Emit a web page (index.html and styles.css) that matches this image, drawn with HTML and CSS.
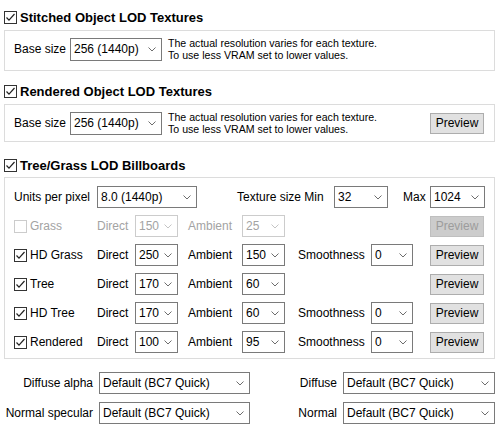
FILE: index.html
```html
<!DOCTYPE html>
<html>
<head>
<meta charset="utf-8">
<link rel="stylesheet" href="styles.css">
</head>
<body>
<div class="panel">

  <div class="heading">
    <span class="cb checked"><svg viewBox="0 0 11 11"><polyline points="1.5,5.5 4,8.2 9.5,2"/></svg></span>
    <span>Stitched Object LOD Textures</span>
  </div>
  <div class="group g-top">
    <div class="row-top">
      <span class="lbl">Base size</span>
      <div class="sel sel-base tall"><span>256 (1440p)</span><svg class="chev" viewBox="0 0 8 5"><polyline points="0.5,0.5 4,4 7.5,0.5"/></svg></div>
      <div class="desc">The actual resolution varies for each texture.<br>To use less VRAM set to lower values.</div>
    </div>
  </div>

  <div class="heading h2">
    <span class="cb checked"><svg viewBox="0 0 11 11"><polyline points="1.5,5.5 4,8.2 9.5,2"/></svg></span>
    <span>Rendered Object LOD Textures</span>
  </div>
  <div class="group g-mid">
    <div class="row-top">
      <span class="lbl">Base size</span>
      <div class="sel sel-base tall"><span>256 (1440p)</span><svg class="chev" viewBox="0 0 8 5"><polyline points="0.5,0.5 4,4 7.5,0.5"/></svg></div>
      <div class="desc">The actual resolution varies for each texture.<br>To use less VRAM set to lower values.</div>
      <button class="btn push">Preview</button>
    </div>
  </div>

  <div class="heading h3">
    <span class="cb checked"><svg viewBox="0 0 11 11"><polyline points="1.5,5.5 4,8.2 9.5,2"/></svg></span>
    <span>Tree/Grass LOD Billboards</span>
  </div>
  <div class="group g-bill">
    <div class="row">
      <span class="c-name">Units per pixel</span>
      <div class="sel sel-units"><span>8.0 (1440p)</span><svg class="chev" viewBox="0 0 8 5"><polyline points="0.5,0.5 4,4 7.5,0.5"/></svg></div>
      <span class="c-tex">Texture size Min</span>
      <div class="sel sel-min"><span>32</span><svg class="chev" viewBox="0 0 8 5"><polyline points="0.5,0.5 4,4 7.5,0.5"/></svg></div>
      <span class="c-max">Max</span>
      <div class="sel sel-max push"><span>1024</span><svg class="chev" viewBox="0 0 8 5"><polyline points="0.5,0.5 4,4 7.5,0.5"/></svg></div>
    </div>

    <div class="row disabled">
      <span class="c-name"><span class="cb"></span>Grass</span>
      <span class="c-direct">Direct</span>
      <div class="sel sel-sm"><span>150</span><svg class="chev" viewBox="0 0 8 5"><polyline points="0.5,0.5 4,4 7.5,0.5"/></svg></div>
      <span class="c-amb">Ambient</span>
      <div class="sel sel-sm"><span>25</span><svg class="chev" viewBox="0 0 8 5"><polyline points="0.5,0.5 4,4 7.5,0.5"/></svg></div>
      <button class="btn push">Preview</button>
    </div>

    <div class="row">
      <span class="c-name"><span class="cb checked"><svg viewBox="0 0 11 11"><polyline points="1.5,5.5 4,8.2 9.5,2"/></svg></span>HD Grass</span>
      <span class="c-direct">Direct</span>
      <div class="sel sel-sm"><span>250</span><svg class="chev" viewBox="0 0 8 5"><polyline points="0.5,0.5 4,4 7.5,0.5"/></svg></div>
      <span class="c-amb">Ambient</span>
      <div class="sel sel-sm"><span>150</span><svg class="chev" viewBox="0 0 8 5"><polyline points="0.5,0.5 4,4 7.5,0.5"/></svg></div>
      <span class="c-smooth">Smoothness</span>
      <div class="sel sel-s0"><span>0</span><svg class="chev" viewBox="0 0 8 5"><polyline points="0.5,0.5 4,4 7.5,0.5"/></svg></div>
      <button class="btn push">Preview</button>
    </div>

    <div class="row">
      <span class="c-name"><span class="cb checked"><svg viewBox="0 0 11 11"><polyline points="1.5,5.5 4,8.2 9.5,2"/></svg></span>Tree</span>
      <span class="c-direct">Direct</span>
      <div class="sel sel-sm"><span>170</span><svg class="chev" viewBox="0 0 8 5"><polyline points="0.5,0.5 4,4 7.5,0.5"/></svg></div>
      <span class="c-amb">Ambient</span>
      <div class="sel sel-sm"><span>60</span><svg class="chev" viewBox="0 0 8 5"><polyline points="0.5,0.5 4,4 7.5,0.5"/></svg></div>
      <button class="btn push">Preview</button>
    </div>

    <div class="row">
      <span class="c-name"><span class="cb checked"><svg viewBox="0 0 11 11"><polyline points="1.5,5.5 4,8.2 9.5,2"/></svg></span>HD Tree</span>
      <span class="c-direct">Direct</span>
      <div class="sel sel-sm"><span>170</span><svg class="chev" viewBox="0 0 8 5"><polyline points="0.5,0.5 4,4 7.5,0.5"/></svg></div>
      <span class="c-amb">Ambient</span>
      <div class="sel sel-sm"><span>60</span><svg class="chev" viewBox="0 0 8 5"><polyline points="0.5,0.5 4,4 7.5,0.5"/></svg></div>
      <span class="c-smooth">Smoothness</span>
      <div class="sel sel-s0"><span>0</span><svg class="chev" viewBox="0 0 8 5"><polyline points="0.5,0.5 4,4 7.5,0.5"/></svg></div>
      <button class="btn push">Preview</button>
    </div>

    <div class="row">
      <span class="c-name"><span class="cb checked"><svg viewBox="0 0 11 11"><polyline points="1.5,5.5 4,8.2 9.5,2"/></svg></span>Rendered</span>
      <span class="c-direct">Direct</span>
      <div class="sel sel-sm"><span>100</span><svg class="chev" viewBox="0 0 8 5"><polyline points="0.5,0.5 4,4 7.5,0.5"/></svg></div>
      <span class="c-amb">Ambient</span>
      <div class="sel sel-sm"><span>95</span><svg class="chev" viewBox="0 0 8 5"><polyline points="0.5,0.5 4,4 7.5,0.5"/></svg></div>
      <span class="c-smooth">Smoothness</span>
      <div class="sel sel-s0"><span>0</span><svg class="chev" viewBox="0 0 8 5"><polyline points="0.5,0.5 4,4 7.5,0.5"/></svg></div>
      <button class="btn push">Preview</button>
    </div>
  </div>

  <div class="formats">
    <span class="f-lbl">Diffuse alpha</span>
    <div class="sel"><span>Default (BC7 Quick)</span><svg class="chev" viewBox="0 0 8 5"><polyline points="0.5,0.5 4,4 7.5,0.5"/></svg></div>
    <span class="f-lbl">Diffuse</span>
    <div class="sel"><span>Default (BC7 Quick)</span><svg class="chev" viewBox="0 0 8 5"><polyline points="0.5,0.5 4,4 7.5,0.5"/></svg></div>
    <span class="f-lbl">Normal specular</span>
    <div class="sel"><span>Default (BC7 Quick)</span><svg class="chev" viewBox="0 0 8 5"><polyline points="0.5,0.5 4,4 7.5,0.5"/></svg></div>
    <span class="f-lbl">Normal</span>
    <div class="sel"><span>Default (BC7 Quick)</span><svg class="chev" viewBox="0 0 8 5"><polyline points="0.5,0.5 4,4 7.5,0.5"/></svg></div>
  </div>

</div>
</body>
</html>
```

FILE: styles.css
```css
* { box-sizing: border-box; }

body {
  margin: 0;
  background: #fff;
  color: #000;
  font-family: "Liberation Sans", Arial, sans-serif;
  font-size: 12px;
}

.panel {
  padding: 11px 5px 0 4px;
}

.heading {
  display: flex;
  align-items: center;
  gap: 3px;
  height: 13px;
  font-size: 13px;
  font-weight: bold;
  white-space: nowrap;
}
.h2 { margin-top: 14px; }
.h3 { margin-top: 17px; }

.cb {
  display: inline-flex;
  align-items: center;
  justify-content: center;
  width: 13px;
  height: 13px;
  flex: none;
  border: 1px solid #333;
  background: #fff;
}
.cb svg {
  width: 11px;
  height: 11px;
}
.cb polyline {
  fill: none;
  stroke: #222;
  stroke-width: 1.2;
}

.group {
  border: 1px solid #dcdcdc;
  margin-top: 6px;
  padding: 0 10px 0 9px;
}
.g-top { padding-top: 6px; padding-bottom: 9px; }
.g-mid { padding-top: 6px; padding-bottom: 6px; }
.g-bill {
  margin-top: 5px;
  padding-top: 8px;
  padding-bottom: 5px;
  display: flex;
  flex-direction: column;
  gap: 7px;
}

.row-top {
  display: flex;
  align-items: center;
}
.lbl { width: 56px; }

.sel {
  display: flex;
  align-items: center;
  justify-content: space-between;
  height: 22px;
  padding: 0 5px 0 3px;
  border: 1px solid #7a7a7a;
  background: #fff;
  white-space: nowrap;
  font-size: 12px;
}
.sel.tall { height: 23px; }
.chev {
  width: 8px;
  height: 5px;
  flex: none;
}
.chev polyline {
  fill: none;
  stroke: #6d6d6d;
  stroke-width: 1;
}

.sel-base { width: 92px; }
.desc {
  margin-left: 6px;
  font-size: 10.6px;
  line-height: 12px;
  white-space: nowrap;
}

.btn {
  width: 54px;
  height: 21px;
  padding: 0;
  border: 1px solid #adadad;
  background: #e1e1e1;
  color: #000;
  font-family: inherit;
  font-size: 12px;
}
.push { margin-left: auto; }

.row {
  display: flex;
  align-items: center;
  height: 22px;
  white-space: nowrap;
}
.c-name {
  display: flex;
  align-items: center;
  gap: 3px;
  width: 83px;
}
.c-direct { width: 38px; }
.c-amb { width: 54px; margin-left: 10px; }
.c-smooth { width: 73px; margin-left: 13px; }
.sel-sm { width: 43px; }
.sel-s0 { width: 42px; }
.sel-units { width: 100px; }
.c-tex { width: 97px; margin-left: 40px; }
.sel-min { width: 54px; }
.c-max { width: 27px; margin-left: 15px; }
.sel-max { width: 55px; margin-right: -1px; }

.disabled { color: #a3a3a3; }
.disabled .cb { border-color: #cccccc; }
.disabled .sel { border-color: #cccccc; }
.disabled .chev polyline { stroke: #c4c4c4; }
.disabled .btn {
  background: #cccccc;
  border-color: #bfbfbf;
  color: #9c9c9c;
}

.formats {
  display: grid;
  grid-template-columns: 93px 151px 81px 152px;
  column-gap: 6px;
  row-gap: 8px;
  margin-top: 13px;
  margin-left: -4px;
  align-items: center;
}
.formats .sel { height: 22px; }
.f-lbl {
  text-align: right;
  white-space: nowrap;
}
```
